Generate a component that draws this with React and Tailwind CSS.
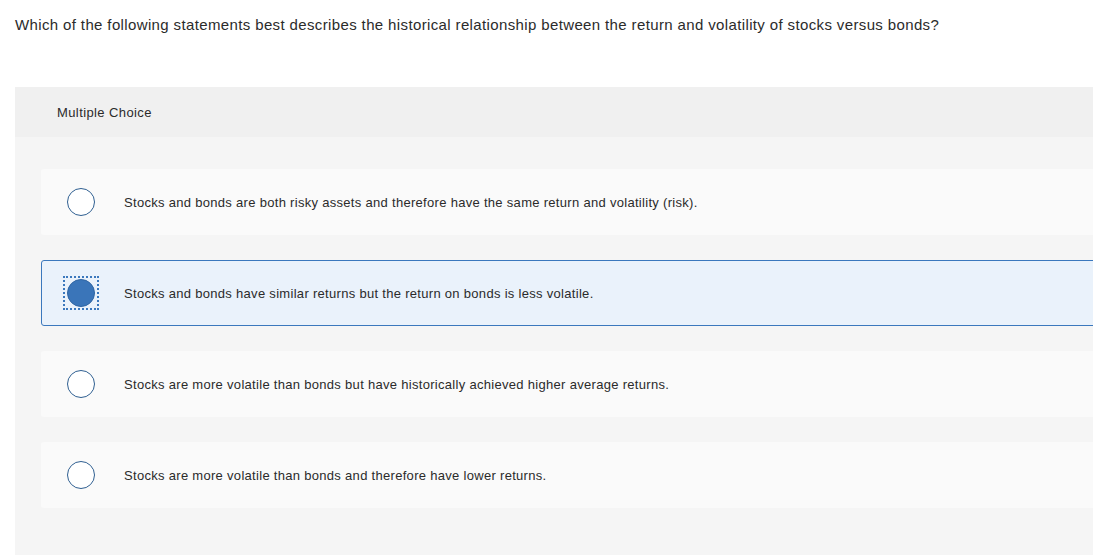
import { useState } from "react";

const options = [
  "Stocks and bonds are both risky assets and therefore have the same return and volatility (risk).",
  "Stocks and bonds have similar returns but the return on bonds is less volatile.",
  "Stocks are more volatile than bonds but have historically achieved higher average returns.",
  "Stocks are more volatile than bonds and therefore have lower returns.",
];

export default function App() {
  const [selected, setSelected] = useState(1);

  return (
    <div
      className="w-full h-[555px] overflow-hidden bg-white text-[#333]"
      style={{ fontFamily: '"Liberation Sans", Arial, sans-serif' }}
    >
      {/* Question */}
      <p className="pl-[15px] pt-[15px] text-[15px] leading-5 tracking-[0.37px] text-[#2b2b2b]">
        Which of the following statements best describes the historical relationship between the return and volatility of stocks versus bonds?
      </p>

      {/* Answer panel */}
      <div className="ml-[15px] mt-[52px] w-[1130px] bg-[#f5f5f5] pb-[60px]">
        <div className="h-[50px] bg-[#f0f0f0] pl-[42px] pt-[2px] flex items-center text-[13px] tracking-[0.4px] text-[#2b2b2b]">
          Multiple Choice
        </div>

        <div className="pt-[32px] pl-[26px] pr-[26px] flex flex-col gap-[25px]">
          {options.map((text, i) => {
            const active = selected === i;
            return (
              <label
                key={i}
                onClick={() => setSelected(i)}
                className={
                  active
                    ? "h-[66px] flex items-center rounded-[3px] border border-[#3b78bd] bg-[#eaf2fb] pl-[21px] cursor-pointer"
                    : "h-[66px] flex items-center rounded-[3px] border border-transparent bg-[#fafafa] pl-[21px] cursor-pointer"
                }
              >
                <span
                  className={
                    active
                      ? "w-[36px] h-[34px] flex items-center justify-center border-2 border-dotted border-[#3b78bd]"
                      : "w-[36px] h-[34px] flex items-center justify-center border-2 border-transparent"
                  }
                >
                  {active ? (
                    <span className="w-[28px] h-[28px] rounded-full bg-[#3a75b9] border border-[#2f65a3]" />
                  ) : (
                    <span className="w-[28px] h-[28px] rounded-full bg-white border-[1.5px] border-[#2f5f91]" />
                  )}
                </span>
                <span className="ml-[25px] pt-[2px] text-[13px] tracking-[0.3px] text-[#2b2b2b]">{text}</span>
              </label>
            );
          })}
        </div>
      </div>
    </div>
  );
}
